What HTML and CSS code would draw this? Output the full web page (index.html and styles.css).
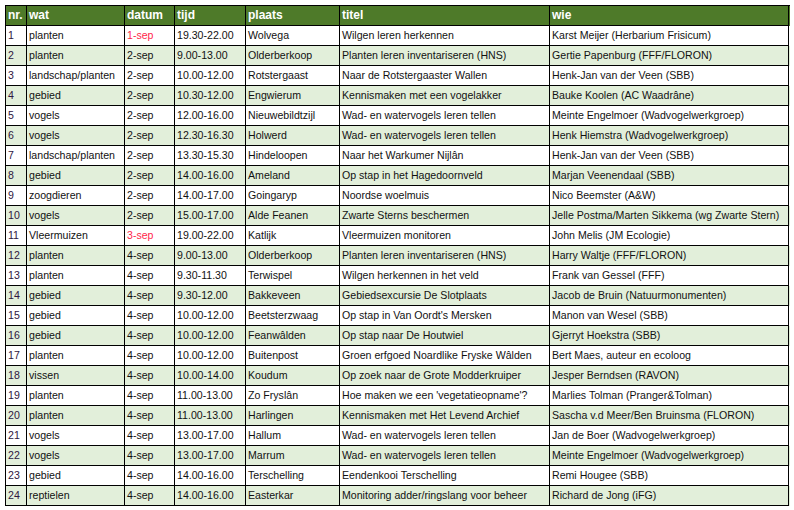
FILE: index.html
```html
<!DOCTYPE html>
<html>
<head>
<meta charset="utf-8">
<link rel="stylesheet" href="styles.css">
</head>
<body>
<div class="sheet">
  <div class="row head"><div>nr.</div><div>wat</div><div>datum</div><div>tijd</div><div>plaats</div><div>titel</div><div>wie</div></div>
  <div class="row"><div class="nr">1</div><div>planten</div><div class="red">1-sep</div><div>19.30-22.00</div><div>Wolvega</div><div>Wilgen leren herkennen</div><div>Karst Meijer (Herbarium Frisicum)</div></div>
  <div class="row alt"><div class="nr">2</div><div>planten</div><div>2-sep</div><div>9.00-13.00</div><div>Olderberkoop</div><div>Planten leren inventariseren (HNS)</div><div>Gertie Papenburg (FFF/FLORON)</div></div>
  <div class="row"><div class="nr">3</div><div>landschap/planten</div><div>2-sep</div><div>10.00-12.00</div><div>Rotstergaast</div><div>Naar de Rotstergaaster Wallen</div><div>Henk-Jan van der Veen (SBB)</div></div>
  <div class="row alt"><div class="nr">4</div><div>gebied</div><div>2-sep</div><div>10.30-12.00</div><div>Engwierum</div><div>Kennismaken met een vogelakker</div><div>Bauke Koolen (AC Waadrâne)</div></div>
  <div class="row"><div class="nr">5</div><div>vogels</div><div>2-sep</div><div>12.00-16.00</div><div>Nieuwebildtzijl</div><div>Wad- en watervogels leren tellen</div><div>Meinte Engelmoer (Wadvogelwerkgroep)</div></div>
  <div class="row alt"><div class="nr">6</div><div>vogels</div><div>2-sep</div><div>12.30-16.30</div><div>Holwerd</div><div>Wad- en watervogels leren tellen</div><div>Henk Hiemstra (Wadvogelwerkgroep)</div></div>
  <div class="row"><div class="nr">7</div><div>landschap/planten</div><div>2-sep</div><div>13.30-15.30</div><div>Hindeloopen</div><div>Naar het Warkumer Nijlân</div><div>Henk-Jan van der Veen (SBB)</div></div>
  <div class="row alt"><div class="nr">8</div><div>gebied</div><div>2-sep</div><div>14.00-16.00</div><div>Ameland</div><div>Op stap in het Hagedoornveld</div><div>Marjan Veenendaal (SBB)</div></div>
  <div class="row"><div class="nr">9</div><div>zoogdieren</div><div>2-sep</div><div>14.00-17.00</div><div>Goingaryp</div><div>Noordse woelmuis</div><div>Nico Beemster (A&amp;W)</div></div>
  <div class="row alt"><div class="nr">10</div><div>vogels</div><div>2-sep</div><div>15.00-17.00</div><div>Alde Feanen</div><div>Zwarte Sterns beschermen</div><div>Jelle Postma/Marten Sikkema (wg Zwarte Stern)</div></div>
  <div class="row"><div class="nr">11</div><div>Vleermuizen</div><div class="red">3-sep</div><div>19.00-22.00</div><div>Katlijk</div><div>Vleermuizen monitoren</div><div>John Melis (JM Ecologie)</div></div>
  <div class="row alt"><div class="nr">12</div><div>planten</div><div>4-sep</div><div>9.00-13.00</div><div>Olderberkoop</div><div>Planten leren inventariseren (HNS)</div><div>Harry Waltje (FFF/FLORON)</div></div>
  <div class="row"><div class="nr">13</div><div>planten</div><div>4-sep</div><div>9.30-11.30</div><div>Terwispel</div><div>Wilgen herkennen in het veld</div><div>Frank van Gessel (FFF)</div></div>
  <div class="row alt"><div class="nr">14</div><div>gebied</div><div>4-sep</div><div>9.30-12.00</div><div>Bakkeveen</div><div>Gebiedsexcursie De Slotplaats</div><div>Jacob de Bruin (Natuurmonumenten)</div></div>
  <div class="row"><div class="nr">15</div><div>gebied</div><div>4-sep</div><div>10.00-12.00</div><div>Beetsterzwaag</div><div>Op stap in Van Oordt's Mersken</div><div>Manon van Wesel (SBB)</div></div>
  <div class="row alt"><div class="nr">16</div><div>gebied</div><div>4-sep</div><div>10.00-12.00</div><div>Feanwâlden</div><div>Op stap naar De Houtwiel</div><div>Gjerryt Hoekstra (SBB)</div></div>
  <div class="row"><div class="nr">17</div><div>planten</div><div>4-sep</div><div>10.00-12.00</div><div>Buitenpost</div><div>Groen erfgoed Noardlike Fryske Wâlden</div><div>Bert Maes, auteur en ecoloog</div></div>
  <div class="row alt"><div class="nr">18</div><div>vissen</div><div>4-sep</div><div>10.00-14.00</div><div>Koudum</div><div>Op zoek naar de Grote Modderkruiper</div><div>Jesper Berndsen (RAVON)</div></div>
  <div class="row"><div class="nr">19</div><div>planten</div><div>4-sep</div><div>11.00-13.00</div><div>Zo Fryslân</div><div>Hoe maken we een 'vegetatieopname'?</div><div>Marlies Tolman (Pranger&amp;Tolman)</div></div>
  <div class="row alt"><div class="nr">20</div><div>planten</div><div>4-sep</div><div>11.00-13.00</div><div>Harlingen</div><div>Kennismaken met Het Levend Archief</div><div>Sascha v.d Meer/Ben Bruinsma (FLORON)</div></div>
  <div class="row"><div class="nr">21</div><div>vogels</div><div>4-sep</div><div>13.00-17.00</div><div>Hallum</div><div>Wad- en watervogels leren tellen</div><div>Jan de Boer (Wadvogelwerkgroep)</div></div>
  <div class="row alt"><div class="nr">22</div><div>vogels</div><div>4-sep</div><div>13.00-17.00</div><div>Marrum</div><div>Wad- en watervogels leren tellen</div><div>Meinte Engelmoer (Wadvogelwerkgroep)</div></div>
  <div class="row"><div class="nr">23</div><div>gebied</div><div>4-sep</div><div>14.00-16.00</div><div>Terschelling</div><div>Eendenkooi Terschelling</div><div>Remi Hougee (SBB)</div></div>
  <div class="row alt"><div class="nr">24</div><div>reptielen</div><div>4-sep</div><div>14.00-16.00</div><div>Easterkar</div><div>Monitoring adder/ringslang voor beheer</div><div>Richard de Jong (iFG)</div></div>
</div>
</body>
</html>
```

FILE: styles.css
```css
html, body {
  margin: 0;
  padding: 0;
  background: #ffffff;
}
body {
  padding: 5px;
  font-family: "Liberation Sans", Arial, sans-serif;
  font-size: 10.6px;
  color: #111111;
}
.sheet {
  width: 784px;
  border-left: 1px solid #000;
  border-top: 1px solid #000;
}
.row {
  display: grid;
  grid-template-columns: 21px 98px 50px 71px 94px 210px 239px;
  height: 20px;
  background: #ffffff;
}
.row.alt {
  background: #e2efda;
}
.row > div {
  box-sizing: border-box;
  border-right: 1px solid #000;
  border-bottom: 1px solid #000;
  padding-left: 2px;
  line-height: 19px;
  white-space: nowrap;
  overflow: hidden;
}
.row.head {
  background: #4e7a29;
  color: #ffffff;
  font-weight: bold;
  font-size: 12px;
}
.nr {
  color: #2e1640;
}
.red {
  color: #ff1f4b;
}
```
